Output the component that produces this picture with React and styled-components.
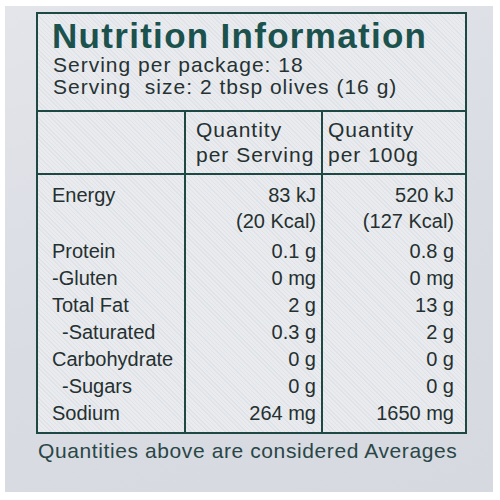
import React from 'react';
import styled, { createGlobalStyle } from 'styled-components';

const GlobalStyle = createGlobalStyle`
  html, body {
    margin: 0;
    padding: 0;
    background: #ffffff;
  }
  * {
    box-sizing: border-box;
  }
`;

const Page = styled.div`
  width: 500px;
  height: 500px;
  padding: 6px 7px 8px 5px;
  background: #ffffff;
  font-family: 'Liberation Sans', Arial, sans-serif;
`;

const Panel = styled.div`
  height: 100%;
  padding: 6px 0 0 31px;
  background: linear-gradient(160deg, #e3e5ea 0%, #d9dce3 55%, #d6d9e0 100%);
`;

const Label = styled.section`
  width: 431px;
  border: 2px solid #1e4843;
  background-color: #e9ebef;
  background-image: repeating-linear-gradient(
    45deg,
    rgba(40, 60, 70, 0.05) 0 1px,
    transparent 1px 3px
  );
`;

const Header = styled.header`
  padding: 4px 0 12px 14px;
  border-bottom: 2px solid #1e4843;
`;

const Title = styled.h1`
  margin: 0;
  font-size: 35px;
  line-height: 36px;
  font-weight: 700;
  letter-spacing: 1.3px;
  color: #1b524d;
`;

const Serving = styled.div`
  padding-left: 1px;
  font-size: 21px;
  line-height: 22px;
  letter-spacing: 1px;
  white-space: pre;
  color: #263232;
`;

const Table = styled.div`
  display: grid;
  grid-template-columns: 146px 137px 1fr;
  color: #253030;
`;

const HeadCell = styled.div`
  padding: 5px 0 6px ${(p) => p.$pad}px;
  border-bottom: 2px solid #1e4843;
  border-left: ${(p) => (p.$divided ? '2px solid #1e4843' : 'none')};
  font-size: 21px;
  line-height: 25px;
  letter-spacing: 1px;
`;

const BodyCell = styled.div`
  padding: 7px ${(p) => p.$right || 0}px 5px ${(p) => p.$left || 0}px;
  border-left: ${(p) => (p.$divided ? '2px solid #1e4843' : 'none')};
  text-align: ${(p) => (p.$numeric ? 'right' : 'left')};
  font-size: 20px;
`;

const EnergyGroup = styled.div`
  margin-bottom: 4px;
`;

const EnergyLine = styled.div`
  line-height: 26px;
  white-space: pre;
`;

const Line = styled.div`
  line-height: 27px;
  white-space: pre;
  padding-left: ${(p) => (p.$indent ? 10 : 0)}px;
`;

const Footer = styled.p`
  margin: 5px 0 0 2px;
  font-size: 21px;
  line-height: 24px;
  letter-spacing: 0.6px;
  color: #2a4646;
`;

const energy = { label: 'Energy', serving: ['83 kJ', '(20 Kcal)'], per100: ['520 kJ', '(127 Kcal)'] };

const rows = [
  { label: 'Protein', serving: '0.1 g', per100: '0.8 g' },
  { label: '-Gluten', serving: '0 mg', per100: '0 mg' },
  { label: 'Total Fat', serving: '2 g', per100: '13 g' },
  { label: '-Saturated', serving: '0.3 g', per100: '2 g', indent: true },
  { label: 'Carbohydrate', serving: '0 g', per100: '0 g' },
  { label: '-Sugars', serving: '0 g', per100: '0 g', indent: true },
  { label: 'Sodium', serving: '264 mg', per100: '1650 mg' },
];

const App = () => (
  <>
    <GlobalStyle />
    <Page>
      <Panel>
        <Label>
          <Header>
            <Title>Nutrition Information</Title>
            <Serving>Serving per package: 18</Serving>
            <Serving>Serving  size: 2 tbsp olives (16 g)</Serving>
          </Header>
          <Table>
            <HeadCell $pad={0} />
            <HeadCell $pad={10} $divided>
              Quantity
              <br />
              per Serving
            </HeadCell>
            <HeadCell $pad={5} $divided>
              Quantity
              <br />
              per 100g
            </HeadCell>

            <BodyCell $left={14}>
              <EnergyGroup>
                <EnergyLine>{energy.label}</EnergyLine>
                <EnergyLine> </EnergyLine>
              </EnergyGroup>
              {rows.map((r) => (
                <Line key={r.label} $indent={r.indent}>
                  {r.label}
                </Line>
              ))}
            </BodyCell>
            <BodyCell $right={5} $divided $numeric>
              <EnergyGroup>
                {energy.serving.map((v) => (
                  <EnergyLine key={v}>{v}</EnergyLine>
                ))}
              </EnergyGroup>
              {rows.map((r) => (
                <Line key={r.label}>{r.serving}</Line>
              ))}
            </BodyCell>
            <BodyCell $right={11} $divided $numeric>
              <EnergyGroup>
                {energy.per100.map((v) => (
                  <EnergyLine key={v}>{v}</EnergyLine>
                ))}
              </EnergyGroup>
              {rows.map((r) => (
                <Line key={r.label}>{r.per100}</Line>
              ))}
            </BodyCell>
          </Table>
        </Label>
        <Footer>Quantities above are considered Averages</Footer>
      </Panel>
    </Page>
  </>
);

export default App;
